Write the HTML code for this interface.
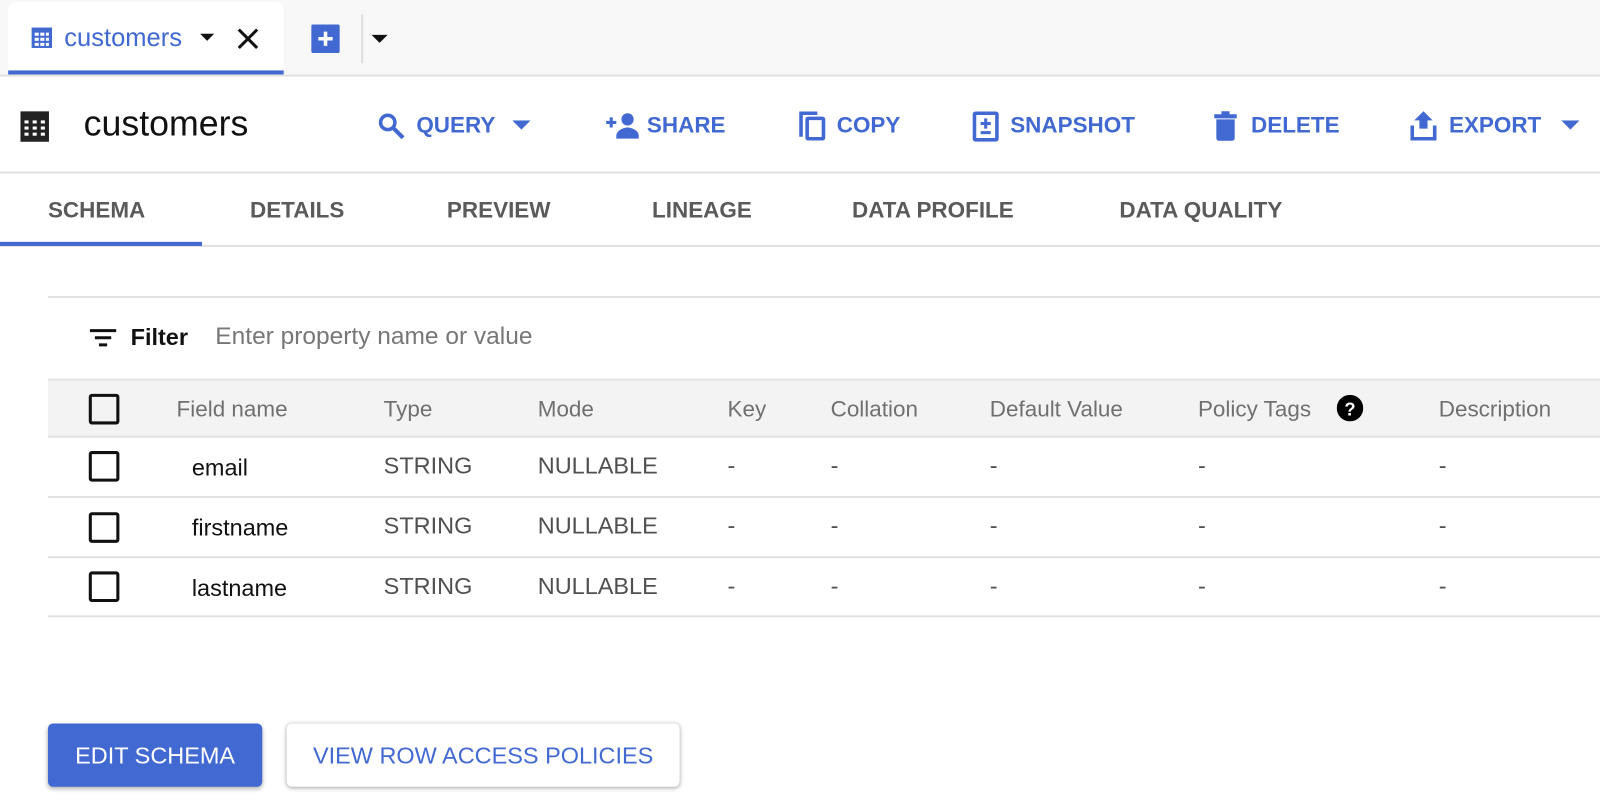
<!DOCTYPE html>
<html><head><meta charset="utf-8"><style>
*{margin:0;padding:0;box-sizing:border-box}
body{width:1600px;height:804px;background:#fff;font-family:"Liberation Sans",Arial,sans-serif;overflow:hidden}
#w{position:relative;width:1568px;height:788px;transform:scale(1.0204);transform-origin:0 0}
.a{position:absolute;white-space:nowrap}
.b{color:#4169d1}
.tb{font-size:22px;font-weight:bold;line-height:24px;top:111px}
.tab{font-size:22px;font-weight:bold;line-height:24px;top:194px;color:#5a5a5a}
.th{font-size:22px;color:#707070;line-height:24px;top:389px}
.td{font-size:23px;color:#505050;line-height:24px}
.cb{position:absolute;left:87px;width:30px;height:30px;border:3px solid #111;border-radius:3px}
.hl{position:absolute;left:47px;right:0;height:2px;background:#e2e2e2}
</style></head><body><div id="w">
<div class="a" style="left:0;top:0;width:1568px;height:73px;background:#f8f8f8"></div>
<div class="a" style="left:8px;top:2px;width:270px;height:71px;background:#fff;border-radius:8px 8px 0 0"></div>
<div class="a" style="left:8px;top:69px;width:270px;height:4px;background:#4169d1"></div>
<div class="a" style="left:0;top:73px;width:1568px;height:2px;background:#e0e0e0"></div>
<svg class="a" style="left:30px;top:26px" width="22" height="22" viewBox="0 0 22 22"><rect x="1" y="1" width="20" height="20" fill="#4169d1"/><g fill="#fff"><rect x="4" y="6" width="4" height="3"/><rect x="9.5" y="6" width="4" height="3"/><rect x="15" y="6" width="3" height="3"/><rect x="4" y="11" width="4" height="3"/><rect x="9.5" y="11" width="4" height="3"/><rect x="15" y="11" width="3" height="3"/><rect x="4" y="16" width="4" height="3"/><rect x="9.5" y="16" width="4" height="3"/><rect x="15" y="16" width="3" height="3"/></g></svg>
<div class="a b" style="left:63px;top:24px;font-size:25px;line-height:26px">customers</div>
<svg class="a" style="left:196px;top:33px" width="14" height="8"><path d="M0 0h14L7 7z" fill="#111"/></svg>
<svg class="a" style="left:232px;top:27px" width="22" height="22"><path d="M2 2L20 20M20 2L2 20" stroke="#111" stroke-width="3"/></svg>
<svg class="a" style="left:305px;top:24px" width="28" height="28"><rect width="28" height="28" rx="2" fill="#4169d1"/><path d="M14 7v14M7 14h14" stroke="#fff" stroke-width="3.5"/></svg>
<div class="a" style="left:354px;top:14px;width:2px;height:48px;background:#ddd"></div>
<svg class="a" style="left:364px;top:34px" width="16" height="8"><path d="M0 0h16L8 8z" fill="#111"/></svg>

<svg class="a" style="left:20px;top:109px" width="28" height="30"><rect width="28" height="30" fill="#222"/><g fill="#fff"><rect x="4" y="9" width="4" height="3"/><rect x="12" y="9" width="4" height="3"/><rect x="20" y="9" width="4" height="3"/><rect x="4" y="15" width="4" height="3"/><rect x="12" y="15" width="4" height="3"/><rect x="20" y="15" width="4" height="3"/><rect x="4" y="21" width="4" height="3"/><rect x="12" y="21" width="4" height="3"/><rect x="20" y="21" width="4" height="3"/></g></svg>
<div class="a" style="left:82px;top:103px;font-size:35px;line-height:38px;color:#111">customers</div>
<svg class="a" style="left:370px;top:110px" width="28" height="28"><circle cx="10" cy="10" r="7" fill="none" stroke="#4169d1" stroke-width="3.5"/><path d="M15 15l10 10" stroke="#4169d1" stroke-width="4"/></svg>
<div class="a b tb" style="left:408px">QUERY</div>
<svg class="a" style="left:502px;top:118px" width="18" height="9"><path d="M0 0h18L9 9z" fill="#4169d1"/></svg>
<svg class="a" style="left:594px;top:110px" width="34" height="26"><path d="M0 10h10M5 5v10" stroke="#4169d1" stroke-width="3"/><circle cx="21" cy="7" r="6" fill="#4169d1"/><path d="M10 26v-3c0-5 7-8 11-8s11 3 11 8v3z" fill="#4169d1"/></svg>
<div class="a b tb" style="left:634px">SHARE</div>
<svg class="a" style="left:783px;top:108px" width="26" height="30"><path d="M2 26V3h16" fill="none" stroke="#4169d1" stroke-width="3.5"/><rect x="8" y="8" width="16" height="20" rx="1" fill="none" stroke="#4169d1" stroke-width="3.5"/></svg>
<div class="a b tb" style="left:820px">COPY</div>
<svg class="a" style="left:953px;top:109px" width="26" height="30"><rect x="2" y="2" width="22" height="26" rx="1" fill="none" stroke="#4169d1" stroke-width="3.5"/><path d="M13 7v10M8 12h10M8 21h10" stroke="#4169d1" stroke-width="3"/></svg>
<div class="a b tb" style="left:990px">SNAPSHOT</div>
<svg class="a" style="left:1189px;top:108px" width="24" height="30"><path d="M1 4h22v4H1zM8 1h8v4H8z" fill="#4169d1"/><path d="M3 9h18v18c0 2-1 3-3 3H6c-2 0-3-1-3-3z" fill="#4169d1"/></svg>
<div class="a b tb" style="left:1226px">DELETE</div>
<svg class="a" style="left:1382px;top:108px" width="26" height="30"><path d="M13 1l9 9h-5v8H9v-8H4z" fill="#4169d1"/><path d="M2 15v13h22V15" fill="none" stroke="#4169d1" stroke-width="3.5"/></svg>
<div class="a b tb" style="left:1420px">EXPORT</div>
<svg class="a" style="left:1530px;top:118px" width="18" height="9"><path d="M0 0h18L9 9z" fill="#4169d1"/></svg>
<div class="a" style="left:0;top:168px;width:1568px;height:2px;background:#e0e0e0"></div>

<div class="a tab b" style="left:47px">SCHEMA</div>
<div class="a tab" style="left:245px">DETAILS</div>
<div class="a tab" style="left:438px">PREVIEW</div>
<div class="a tab" style="left:639px">LINEAGE</div>
<div class="a tab" style="left:835px">DATA PROFILE</div>
<div class="a tab" style="left:1097px">DATA QUALITY</div>
<div class="a" style="left:0;top:240px;width:1568px;height:2px;background:#e0e0e0"></div>
<div class="a" style="left:0;top:237px;width:198px;height:4px;background:#4169d1"></div>

<div class="hl" style="top:290px"></div>
<svg class="a" style="left:88px;top:322px" width="26" height="20"><path d="M0 2h26M5 9h16M9 16h8" stroke="#111" stroke-width="3"/></svg>
<div class="a" style="left:128px;top:318px;font-size:23px;font-weight:bold;line-height:24px;color:#111">Filter</div>
<div class="a" style="left:211px;top:318px;font-size:24px;line-height:24px;color:#777">Enter property name or value</div>

<div class="a" style="left:47px;top:372px;right:0;height:56px;background:#f3f3f3"></div>
<div class="hl" style="top:371px"></div>
<div class="hl" style="top:427px"></div>
<div class="hl" style="top:486px"></div>
<div class="hl" style="top:545px"></div>
<div class="hl" style="top:603px"></div>
<div class="cb" style="top:386px"></div>
<div class="cb" style="top:442px"></div>
<div class="cb" style="top:502px"></div>
<div class="cb" style="top:560px"></div>
<div class="a th" style="left:173px">Field name</div>
<div class="a th" style="left:376px">Type</div>
<div class="a th" style="left:527px">Mode</div>
<div class="a th" style="left:713px">Key</div>
<div class="a th" style="left:814px">Collation</div>
<div class="a th" style="left:970px">Default Value</div>
<div class="a th" style="left:1174px">Policy Tags</div>
<svg class="a" style="left:1310px;top:387px" width="26" height="26"><circle cx="13" cy="13" r="13" fill="#000"/><text x="13" y="20" font-family="Liberation Sans" font-weight="bold" font-size="18" fill="#fff" text-anchor="middle">?</text></svg>
<div class="a th" style="left:1410px">Description</div>

<div class="a td" style="left:188px;top:446px;color:#111">email</div>
<div class="a td" style="left:188px;top:505px;color:#111">firstname</div>
<div class="a td" style="left:188px;top:564px;color:#111">lastname</div>
<div class="a td" style="left:376px;top:444px">STRING</div><div class="a td" style="left:527px;top:444px">NULLABLE</div>
<div class="a td" style="left:376px;top:503px">STRING</div><div class="a td" style="left:527px;top:503px">NULLABLE</div>
<div class="a td" style="left:376px;top:562px">STRING</div><div class="a td" style="left:527px;top:562px">NULLABLE</div>
<div class="a td" style="left:713px;top:444px">-</div><div class="a td" style="left:814px;top:444px">-</div><div class="a td" style="left:970px;top:444px">-</div><div class="a td" style="left:1174px;top:444px">-</div><div class="a td" style="left:1410px;top:444px">-</div>
<div class="a td" style="left:713px;top:503px">-</div><div class="a td" style="left:814px;top:503px">-</div><div class="a td" style="left:970px;top:503px">-</div><div class="a td" style="left:1174px;top:503px">-</div><div class="a td" style="left:1410px;top:503px">-</div>
<div class="a td" style="left:713px;top:562px">-</div><div class="a td" style="left:814px;top:562px">-</div><div class="a td" style="left:970px;top:562px">-</div><div class="a td" style="left:1174px;top:562px">-</div><div class="a td" style="left:1410px;top:562px">-</div>

<div class="a" style="left:47px;top:709px;width:210px;height:62px;background:#4169d1;border-radius:5px;box-shadow:0 2px 4px rgba(0,0,0,.3);color:#fff;font-size:23px;line-height:62px;text-align:center">EDIT SCHEMA</div>
<div class="a b" style="left:281px;top:709px;width:385px;height:62px;background:#fff;border-radius:5px;box-shadow:0 1px 4px rgba(0,0,0,.35);font-size:23px;line-height:62px;text-align:center">VIEW ROW ACCESS POLICIES</div>
</div></body></html>
